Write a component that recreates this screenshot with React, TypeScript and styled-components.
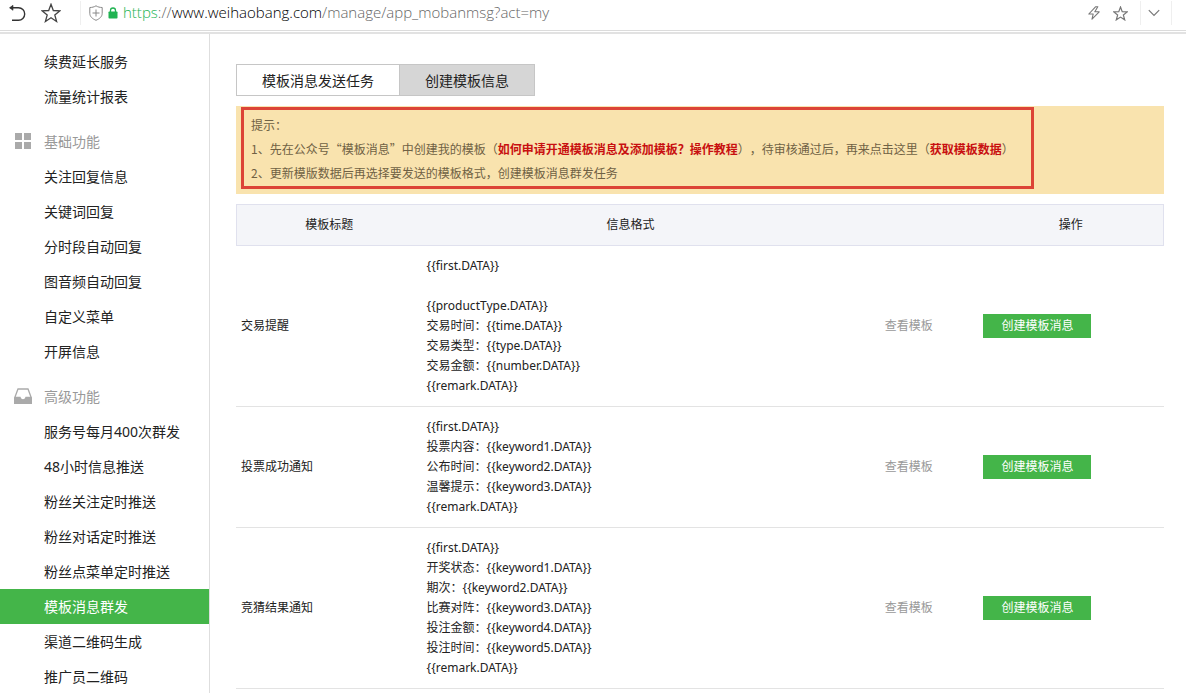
import React from "react";
import styled, { createGlobalStyle, css } from "styled-components";

const LATIN_FIRST = `"Noto Sans", "Noto Sans CJK SC", sans-serif`;
const CJK_FIRST = `"Noto Sans CJK SC", "Noto Sans", sans-serif`;

const GlobalStyle = createGlobalStyle`
  * { box-sizing: border-box; }
  body {
    margin: 0;
    background: #fff;
    color: #222;
    font-family: ${LATIN_FIRST};
    font-size: 12px;
    text-spacing-trim: space-all;
  }
  button { font-family: inherit; cursor: pointer; }
  a { text-decoration: none; }
`;

const Page = styled.div`
  display: flex;
  flex-direction: column;
  height: 100vh;
  overflow: hidden;
`;

const AddressBar = styled.header`
  display: flex;
  align-items: center;
  flex: none;
  height: 31px;
  padding: 0 14px 4px 8px;
  border-bottom: 1px solid #dcdcdc;
`;

const BarShadow = styled.div`
  flex: none;
  height: 3px;
  border-bottom: 2px solid #e2e2e2;
`;

const IconButton = styled.button<{ $gap: number }>`
  display: flex;
  flex: none;
  padding: 0;
  margin-right: ${(p) => p.$gap}px;
  border: 0;
  background: none;
  color: inherit;
`;

const Divider = styled.span<{ $gap: number }>`
  flex: none;
  width: 1px;
  height: 24px;
  margin-right: ${(p) => p.$gap}px;
  background: #efefef;
`;

const Url = styled.div`
  flex: 1;
  min-width: 0;
  padding: 0 0 2px 5px;
  color: #666;
  font-family: "Open Sans", ${LATIN_FIRST};
  font-size: 15px;
  font-weight: 300;
  line-height: 24px;
  white-space: nowrap;
`;

const Scheme = styled.span`
  color: #21b352;
`;

const Host = styled.span`
  color: #000;
`;

const Body = styled.div`
  display: flex;
  flex: 1;
  min-height: 0;
`;

const Sidebar = styled.nav`
  flex: none;
  width: 210px;
  padding-top: 10px;
  overflow: hidden;
  border-right: 1px solid #dedede;
`;

const Group = styled.section`
  margin-bottom: 10px;
`;

const row = css`
  display: flex;
  align-items: center;
  height: 35px;
  font-size: 14px;
  font-weight: 400;
`;

const GroupTitle = styled.h2`
  ${row}
  gap: 12px;
  margin: 0;
  padding: 0 0 2px 14px;
  color: #999;
`;

const MenuLink = styled.a<{ $active: boolean }>`
  ${row}
  padding: 0 0 2px 44px;
  color: ${(p) => (p.$active ? "#fff" : "#222")};
  background: ${(p) => (p.$active ? "#44b549" : "transparent")};
`;

const Main = styled.main`
  flex: 1;
  min-width: 0;
  padding: 30px 22px 0 26px;
  overflow: hidden;
`;

const Tabs = styled.div`
  display: flex;
  margin-bottom: 10px;
`;

const Tab = styled.button<{ $active: boolean }>`
  height: 32px;
  padding: 0 25px;
  border: 1px solid #c6c6c6;
  background: ${(p) => (p.$active ? "#d6d6d6" : "#fff")};
  color: #222;
  font-size: 14px;

  & + & {
    border-left: 0;
  }
`;

const Notice = styled.div`
  margin-bottom: 10px;
  padding: 1px 130px 5px 5px;
  background: #f9e3ae;
`;

const NoticeFrame = styled.div`
  padding: 3px 7px 1px;
  border: 3px solid #dc4437;
  color: #6f6144;
  font-family: ${CJK_FIRST};
  line-height: 24px;
  white-space: nowrap;

  p {
    margin: 0;
  }
`;

const NoticeLink = styled.a`
  color: #c81010;
  font-weight: 700;
`;

const Table = styled.table`
  width: 100%;
  table-layout: fixed;
  border-spacing: 0;
  line-height: 20px;
`;

const HeadRow = styled.tr`
  height: 42px;
  background: #f4f5f9;

  th {
    padding: 0;
    border: solid #e0e1ee;
    border-width: 1px 0;
    font-weight: 400;
  }
  th:first-child {
    border-left-width: 1px;
  }
  th:last-child {
    border-right-width: 1px;
  }
`;

const Cell = styled.td<{ $center?: boolean }>`
  padding: 10px 5px;
  border-bottom: 1px solid #e3e3e3;
  text-align: ${(p) => (p.$center ? "center" : "left")};
`;

const Line = styled.div`
  height: 20px;
`;

const ViewLink = styled.a`
  color: #999;
`;

const CreateButton = styled.button`
  display: block;
  height: 24px;
  padding: 0 18px;
  border: 0;
  background: #44b549;
  color: #fff;
  font-size: 12px;
  line-height: 24px;
`;

const BackIcon = () => (
  <svg width="18" height="18" viewBox="0 0 18 18" fill="none" stroke="#333" strokeWidth="1.4">
    <path d="M2.5 3.8H10.500a6.200 6.200 0 0 1 0 12.400H4" />
    <path d="M5 1.300 1.500 3.800l3.500 2.500z" fill="#333" strokeWidth="0.6" />
  </svg>
);

const StarIcon = ({ size, color }: { size: number; color: string }) => (
  <svg width={size} height={size} viewBox="0 0 20 20" fill="none" stroke={color} strokeWidth={size > 16 ? 1.3 : 1.6}>
    <path d="M10 1.300l2.300 6.200 6.700.3-5.200 4.200 1.800 6.500L10 14.800l-5.600 3.700 1.800-6.500L1 7.800l6.700-.3z" />
  </svg>
);

const ShieldIcon = () => (
  <svg width="14" height="16" viewBox="0 0 14 16" fill="none" stroke="#888">
    <path d="M7 .8C5.200 2 3 2.500.8 2.500v5.800c0 3.400 2.700 5.500 6.200 7 3.500-1.500 6.200-3.600 6.200-7V2.500C11 2.500 8.800 2 7 .8zM7 4.500v7M3.500 8h7" />
  </svg>
);

const LockIcon = () => (
  <svg width="10" height="12" viewBox="0 0 10 12">
    <path d="M2.500 6V3.500a2.500 2.500 0 0 1 5 0V6" fill="none" stroke="#21b352" strokeWidth="1.300" />
    <rect x="0.500" y="4.500" width="9" height="7" rx="0.800" fill="#21b352" />
  </svg>
);

const BoltIcon = () => (
  <svg width="12" height="14" viewBox="0 0 12 14" fill="none" stroke="#777" strokeWidth="1.100" strokeLinejoin="round">
    <path d="M7.500.8.8 8h4.400L4 13.200 11.200 5.800H6.800L9.800.8z" />
  </svg>
);

const ChevronIcon = () => (
  <svg width="12" height="8" viewBox="0 0 12 8" fill="none" stroke="#777" strokeWidth="1.200">
    <path d="M.8 1.200 6 6.400l5.200-5.200" />
  </svg>
);

const GridIcon = () => (
  <svg width="18" height="18" viewBox="0 0 18 18" fill="#aaa">
    <path d="M1 1h7v7H1zM10 1h7v7h-7zM1 10h7v7H1zM10 10h7v7h-7z" />
  </svg>
);

const TrayIcon = () => (
  <svg width="18" height="18" viewBox="0 0 18 18">
    <path d="M4 2h10l3.200 8.500H12c-.5 1.800-1.500 2.500-3 2.500s-2.500-.7-3-2.500H.8z" fill="none" stroke="#aaa" strokeWidth="1.300" />
    <path d="M0 10.500h6C6.500 12.300 7.500 13 9 13s2.500-.7 3-2.500h6V17H0z" fill="#aaa" />
  </svg>
);

type MenuGroup = { title?: string; icon?: React.ReactNode; items: string[] };

const MENU: MenuGroup[] = [
  { items: ["续费延长服务", "流量统计报表"] },
  {
    title: "基础功能",
    icon: <GridIcon />,
    items: ["关注回复信息", "关键词回复", "分时段自动回复", "图音频自动回复", "自定义菜单", "开屏信息"],
  },
  {
    title: "高级功能",
    icon: <TrayIcon />,
    items: [
      "服务号每月400次群发",
      "48小时信息推送",
      "粉丝关注定时推送",
      "粉丝对话定时推送",
      "粉丝点菜单定时推送",
      "模板消息群发",
      "渠道二维码生成",
      "推广员二维码",
    ],
  },
];

const ACTIVE_ITEM = "模板消息群发";

const TEMPLATES = [
  {
    title: "交易提醒",
    lines: [
      "{{first.DATA}}",
      "",
      "{{productType.DATA}}",
      "交易时间：{{time.DATA}}",
      "交易类型：{{type.DATA}}",
      "交易金额：{{number.DATA}}",
      "{{remark.DATA}}",
    ],
  },
  {
    title: "投票成功通知",
    lines: [
      "{{first.DATA}}",
      "投票内容：{{keyword1.DATA}}",
      "公布时间：{{keyword2.DATA}}",
      "温馨提示：{{keyword3.DATA}}",
      "{{remark.DATA}}",
    ],
  },
  {
    title: "竞猜结果通知",
    lines: [
      "{{first.DATA}}",
      "开奖状态：{{keyword1.DATA}}",
      "期次：{{keyword2.DATA}}",
      "比赛对阵：{{keyword3.DATA}}",
      "投注金额：{{keyword4.DATA}}",
      "投注时间：{{keyword5.DATA}}",
      "{{remark.DATA}}",
    ],
  },
];

export default function App() {
  return (
    <Page lang="zh-CN">
      <GlobalStyle />
      <AddressBar>
        <IconButton $gap={15} aria-label="后退"><BackIcon /></IconButton>
        <IconButton $gap={19} aria-label="收藏"><StarIcon size={20} color="#444" /></IconButton>
        <Divider $gap={8} />
        <IconButton $gap={5} aria-label="安全"><ShieldIcon /></IconButton>
        <LockIcon />
        <Url>
          <Scheme>https</Scheme>://<Host>www.weihaobang.com</Host>/manage/app_mobanmsg?act=my
        </Url>
        <IconButton $gap={13} aria-label="极速模式"><BoltIcon /></IconButton>
        <IconButton $gap={12} aria-label="收藏此页"><StarIcon size={15} color="#777" /></IconButton>
        <Divider $gap={7} />
        <IconButton $gap={11} aria-label="展开"><ChevronIcon /></IconButton>
        <Divider $gap={0} />
      </AddressBar>
      <BarShadow />
      <Body>
        <Sidebar>
          {MENU.map((group, i) => (
            <Group key={i}>
              {group.title && (
                <GroupTitle>
                  {group.icon}
                  {group.title}
                </GroupTitle>
              )}
              {group.items.map((item) => (
                <MenuLink key={item} href="#" $active={item === ACTIVE_ITEM}>
                  {item}
                </MenuLink>
              ))}
            </Group>
          ))}
        </Sidebar>
        <Main>
          <Tabs>
            <Tab $active={false}>模板消息发送任务</Tab>
            <Tab $active>创建模板信息</Tab>
          </Tabs>
          <Notice>
            <NoticeFrame>
              <p>提示：</p>
              <p>
                1、先在公众号“模板消息”中创建我的模板（
                <NoticeLink href="#">如何申请开通模板消息及添加模板？操作教程</NoticeLink>
                ），待审核通过后，再来点击这里（
                <NoticeLink href="#">获取模板数据</NoticeLink>）
              </p>
              <p>2、更新模版数据后再选择要发送的模板格式，创建模板消息群发任务</p>
            </NoticeFrame>
          </Notice>
          <Table>
            <colgroup>
              <col style={{ width: "20%" }} />
              <col style={{ width: "45%" }} />
              <col style={{ width: "15%" }} />
              <col style={{ width: "20%" }} />
            </colgroup>
            <thead>
              <HeadRow>
                <th>模板标题</th>
                <th>信息格式</th>
                <th />
                <th>操作</th>
              </HeadRow>
            </thead>
            <tbody>
              {TEMPLATES.map((t) => (
                <tr key={t.title}>
                  <Cell>{t.title}</Cell>
                  <Cell>
                    {t.lines.map((line, i) => (
                      <Line key={i}>{line}</Line>
                    ))}
                  </Cell>
                  <Cell $center>
                    <ViewLink href="#">查看模板</ViewLink>
                  </Cell>
                  <Cell>
                    <CreateButton>创建模板消息</CreateButton>
                  </Cell>
                </tr>
              ))}
            </tbody>
          </Table>
        </Main>
      </Body>
    </Page>
  );
}
